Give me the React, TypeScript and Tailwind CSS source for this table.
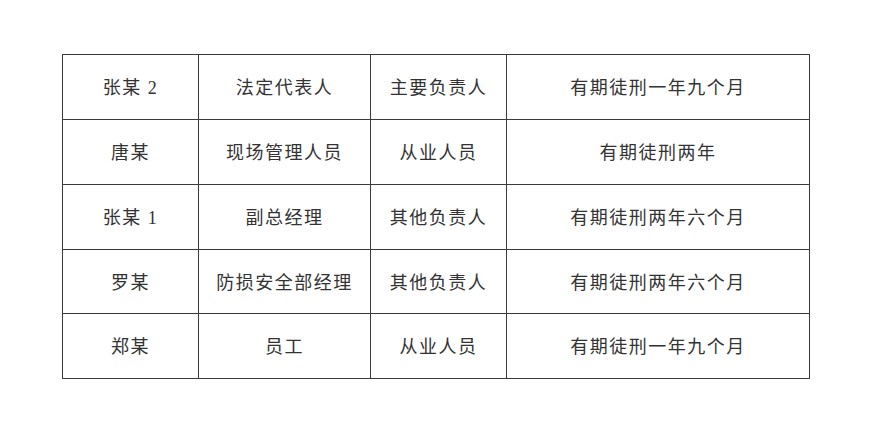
const rows: string[][] = [
  ["张某 2", "法定代表人", "主要负责人", "有期徒刑一年九个月"],
  ["唐某", "现场管理人员", "从业人员", "有期徒刑两年"],
  ["张某 1", "副总经理", "其他负责人", "有期徒刑两年六个月"],
  ["罗某", "防损安全部经理", "其他负责人", "有期徒刑两年六个月"],
  ["郑某", "员工", "从业人员", "有期徒刑一年九个月"],
];

const widths = ["w-[136px]", "w-[172px]", "w-[136px]", "w-[303px]"];
const heights = ["h-[65px]", "h-[65px]", "h-[65px]", "h-[64px]", "h-[65px]"];

export default function App() {
  return (
    <div className="h-[433px] w-[875px] bg-white pl-[62px] pt-[54px]">
      <table
        className="border-collapse text-[18px] tracking-[1.5px] text-[#333]"
        style={{ fontFamily: '"Liberation Serif", "Noto Sans CJK SC", serif' }}
      >
        <tbody>
          {rows.map((row, i) => (
            <tr key={i} className={heights[i]}>
              {row.map((cell, j) => (
                <td key={j} className={`${widths[j]} border border-[#3a3a3a] px-0 pb-0 pt-[3px] text-center align-middle`}>
                  {cell}
                </td>
              ))}
            </tr>
          ))}
        </tbody>
      </table>
    </div>
  );
}
